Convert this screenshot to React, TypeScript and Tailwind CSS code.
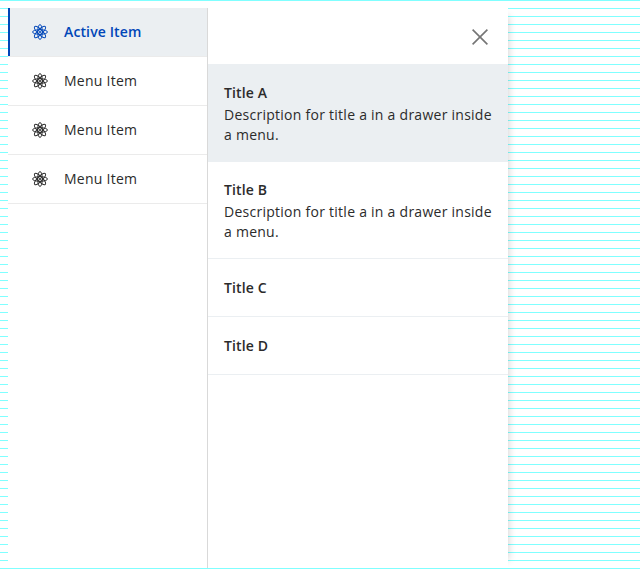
const petals = [0, 45, 90, 135];

function AtomIcon() {
  return (
    <svg className="size-4 shrink-0" viewBox="0 0 16 16" fill="none" stroke="currentColor" strokeWidth="0.95">
      {petals.map((angle) => (
        <ellipse key={angle} cx="8" cy="8" rx="2.3" ry="7.5" transform={`rotate(${angle} 8 8)`} />
      ))}
      <circle cx="8" cy="8" r="1.1" fill="currentColor" stroke="none" />
    </svg>
  );
}

function MenuRow({ label, active = false }: { label: string; active?: boolean }) {
  return (
    <li
      className={
        active
          ? "flex h-[49px] border-b border-[#ebebeb] font-semibold tracking-[0.12px] text-[#0046b8]"
          : "flex h-[49px] border-b border-[#ebebeb] tracking-[0.26px]"
      }
    >
      <div
        className={
          active
            ? "flex flex-1 items-center gap-4 border-l-2 border-[#0046b8] bg-[#ebeff2] pl-[22px]"
            : "flex flex-1 items-center gap-4 pl-6"
        }
      >
        <AtomIcon />
        <span className="leading-6">{label}</span>
      </div>
    </li>
  );
}

function DrawerItem({ title, text, active = false }: { title: string; text?: string; active?: boolean }) {
  return (
    <li
      className={
        "border-b border-[#ebeff2] px-4 " + (text ? "h-[97px] pt-4 " : "h-[58px] pt-[17px] ") + (active ? "bg-[#ebeff2]" : "")
      }
    >
      <h3 className="font-semibold leading-6 tracking-[0.12px]">{title}</h3>
      {text && <p className="-mr-2 leading-5 tracking-[0.26px]">{text}</p>}
    </li>
  );
}

export default function App() {
  const description = "Description for title a in a drawer inside a menu.";
  return (
    <div className="h-[576px] w-[640px] overflow-hidden bg-white bg-[linear-gradient(#80ffff_1px,transparent_1px)] bg-[length:8px_8px] font-['Open_Sans',sans-serif] text-sm text-[#2b2b2b]">
      <div className="h-full pl-2 pt-2">
        <div className="flex h-[560px] w-[500px] bg-white shadow-[8px_0_8px_-8px_rgba(0,0,0,0.2)]">
          <nav className="w-[200px] border-r border-[#d9d9d9]">
            <ul>
              <MenuRow label="Active Item" active />
              <MenuRow label="Menu Item" />
              <MenuRow label="Menu Item" />
              <MenuRow label="Menu Item" />
            </ul>
          </nav>
          <section className="w-[300px]">
            <header className="flex h-[57px] items-center justify-end border-b border-[#ebeff2] pr-5">
              <button aria-label="Close" className="pt-0.5 text-[#757575]">
                <svg className="block size-4" viewBox="0 0 16 16" fill="none" stroke="currentColor" strokeWidth="1.6">
                  <path d="M.6.6 15.4 15.4M15.4.6.6 15.4" />
                </svg>
              </button>
            </header>
            <ul>
              <DrawerItem title="Title A" text={description} active />
              <DrawerItem title="Title B" text={description} />
              <DrawerItem title="Title C" />
              <DrawerItem title="Title D" />
            </ul>
          </section>
        </div>
      </div>
    </div>
  );
}
